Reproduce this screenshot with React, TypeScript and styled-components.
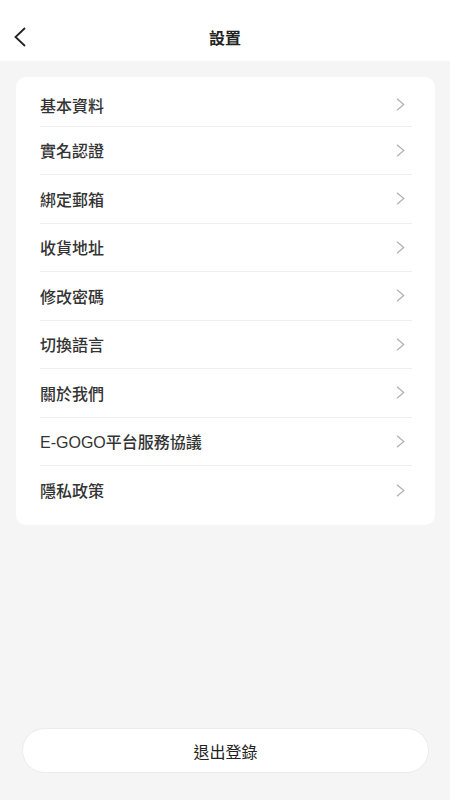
import React from "react";
import styled, { createGlobalStyle } from "styled-components";

const GlobalStyle = createGlobalStyle`
  html, body { margin: 0; padding: 0; background: #f5f5f5; }
  body {
    font-family: "Liberation Sans", "Noto Sans CJK TC", sans-serif;
    -webkit-font-smoothing: antialiased;
  }
  * { box-sizing: border-box; }
`;

const Page = styled.div`
  width: 450px;
  height: 800px;
  display: flex;
  flex-direction: column;
  background: #f5f5f5;
`;

const Header = styled.header`
  height: 61px;
  background: #ffffff;
  display: grid;
  grid-template-columns: 60px 1fr 60px;
  align-items: center;
  padding-top: 13px;
`;

const BackButton = styled.button`
  border: none;
  background: none;
  padding: 0 0 0 13px;
  display: flex;
  align-items: center;
  cursor: pointer;
  height: 24px;
`;

const Title = styled.h1`
  margin: 0;
  text-align: center;
  font-size: 16px;
  font-weight: 700;
  color: #222;
`;

const Content = styled.main`
  flex: 1;
  display: flex;
  flex-direction: column;
  padding: 16px 15px 0 16px;
`;

const Card = styled.section`
  background: #ffffff;
  border-radius: 10px;
  padding: 0 23px 10.5px 24px;
  display: flex;
  flex-direction: column;
`;

const Row = styled.div<{ $last?: boolean }>`
  height: 48.5px;
  display: flex;
  align-items: center;
  justify-content: space-between;
  padding: 0 7px 0 0;
  border-bottom: ${(p) => (p.$last ? "none" : "1px solid #efefef")};

  &:first-child {
    height: 49.5px;
    padding-top: 7px;
  }
`;

const Label = styled.span`
  font-size: 16px;
  font-weight: 500;
  color: #333;
`;

const Spacer = styled.div`
  flex: 1;
`;

const LogoutButton = styled.button`
  margin: 0 6px 27px 6px;
  height: 45px;
  border-radius: 23px;
  border: 1px solid #ececec;
  background: #ffffff;
  font-family: "Liberation Sans", "Noto Sans CJK TC", sans-serif;
  font-size: 16px;
  font-weight: 400;
  color: #222;
  cursor: pointer;
`;

const Chevron = () => (
  <svg width="9" height="13" viewBox="0 0 9 13" fill="none">
    <path d="M1 0.8 L7.8 6.5 L1 12.2" stroke="#b0b0b0" strokeWidth="1.2" />
  </svg>
);

const BackIcon = () => (
  <svg width="14" height="20" viewBox="0 0 14 20" fill="none">
    <path d="M12 1 L2.5 10 L12 19" stroke="#222" strokeWidth="1.8" />
  </svg>
);

const items = [
  "基本資料",
  "實名認證",
  "綁定郵箱",
  "收貨地址",
  "修改密碼",
  "切換語言",
  "關於我們",
  "E-GOGO平台服務協議",
  "隱私政策",
];

export default function App() {
  return (
    <>
      <GlobalStyle />
      <Page>
        <Header>
          <BackButton aria-label="返回">
            <BackIcon />
          </BackButton>
          <Title>設置</Title>
          <div />
        </Header>
        <Content>
          <Card>
            {items.map((t, i) => (
              <Row key={t} $last={i === items.length - 1}>
                <Label>{t}</Label>
                <Chevron />
              </Row>
            ))}
          </Card>
          <Spacer />
          <LogoutButton>退出登錄</LogoutButton>
        </Content>
      </Page>
    </>
  );
}
